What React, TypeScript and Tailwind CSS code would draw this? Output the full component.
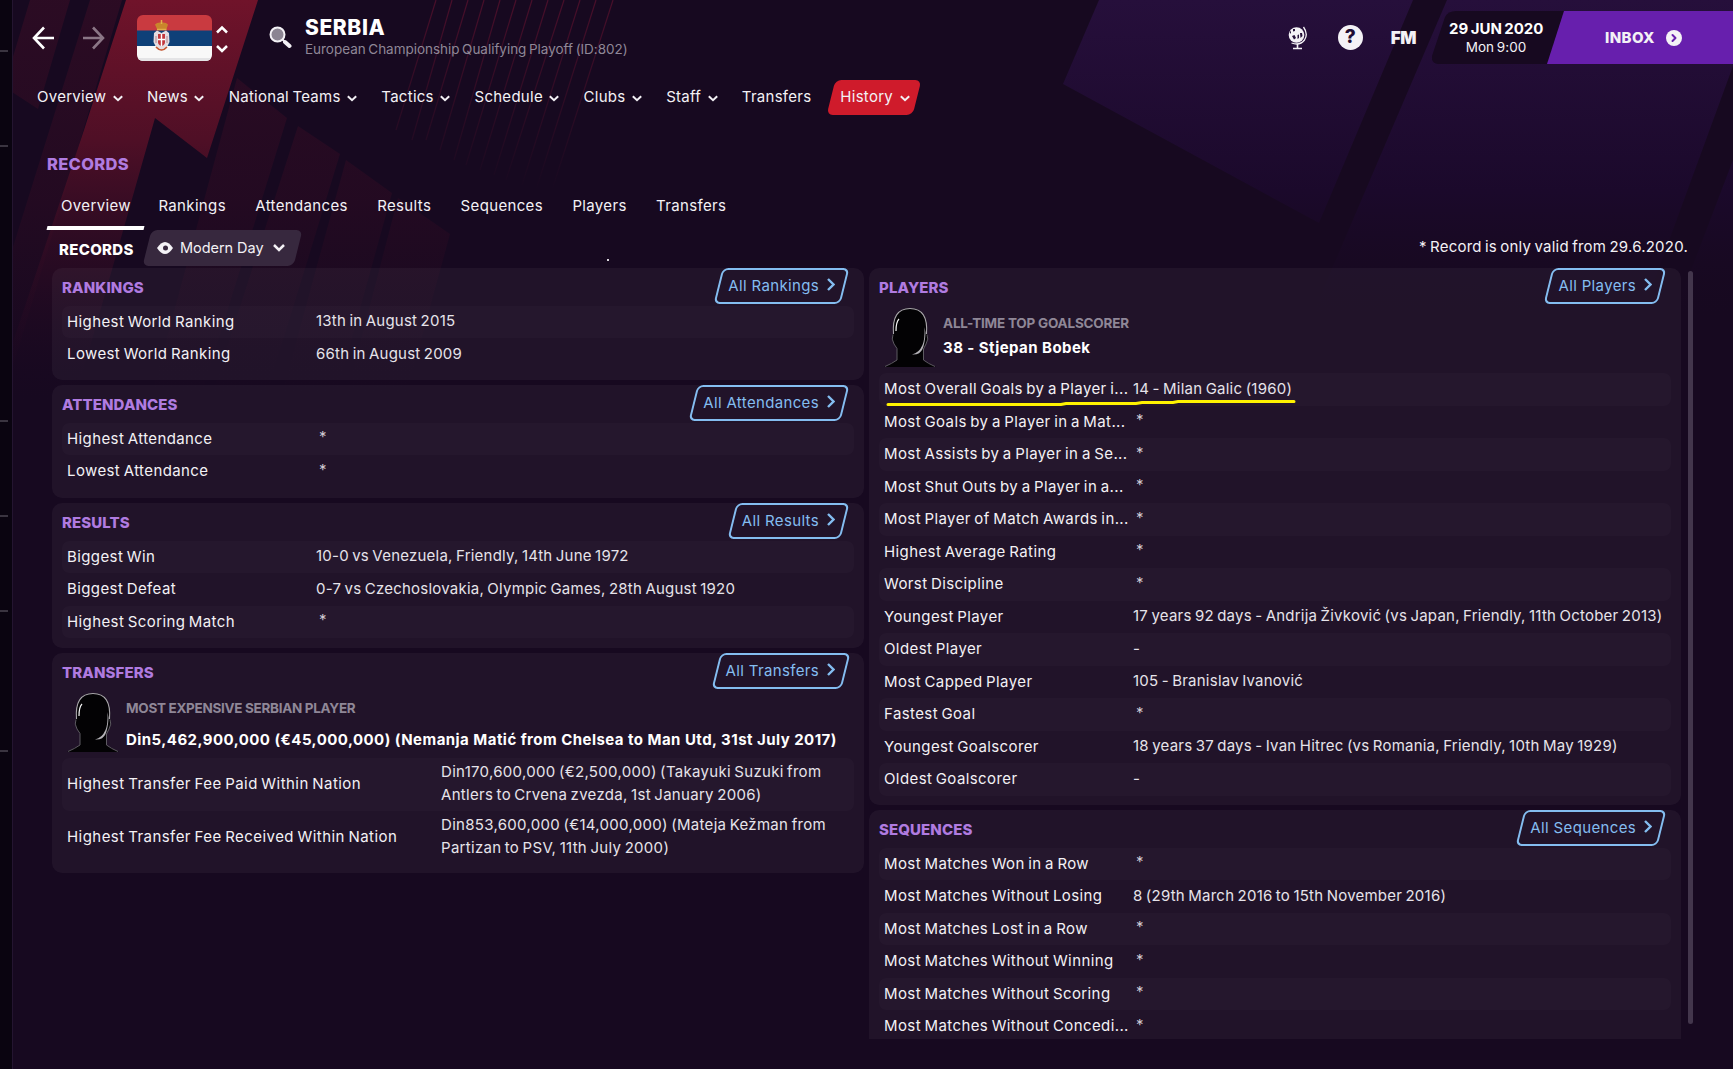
import { ChevronRight } from 'lucide-react';

type Row = { label: string; value: string };

const navItems = ['Overview', 'News', 'National Teams', 'Tactics', 'Schedule', 'Clubs', 'Staff'];

const tabs = ['Rankings', 'Attendances', 'Results', 'Sequences', 'Players', 'Transfers'];

const rankings: Row[] = [
  { label: 'Highest World Ranking', value: '13th in August 2015' },
  { label: 'Lowest World Ranking', value: '66th in August 2009' },
];

const attendances: Row[] = [
  { label: 'Highest Attendance', value: '*' },
  { label: 'Lowest Attendance', value: '*' },
];

const results: Row[] = [
  { label: 'Biggest Win', value: '10-0 vs Venezuela, Friendly, 14th June 1972' },
  { label: 'Biggest Defeat', value: '0-7 vs Czechoslovakia, Olympic Games, 28th August 1920' },
  { label: 'Highest Scoring Match', value: '*' },
];

const transfers = [
  {
    label: 'Highest Transfer Fee Paid Within Nation',
    lines: ['Din170,600,000 (€2,500,000) (Takayuki Suzuki from', 'Antlers to Crvena zvezda, 1st January 2006)'],
  },
  {
    label: 'Highest Transfer Fee Received Within Nation',
    lines: ['Din853,600,000 (€14,000,000) (Mateja Kežman from', 'Partizan to PSV, 11th July 2000)'],
  },
];

const players: Row[] = [
  { label: 'Most Overall Goals by a Player i...', value: '14 - Milan Galic (1960)' },
  { label: 'Most Goals by a Player in a Mat...', value: '*' },
  { label: 'Most Assists by a Player in a Se...', value: '*' },
  { label: 'Most Shut Outs by a Player in a...', value: '*' },
  { label: 'Most Player of Match Awards in...', value: '*' },
  { label: 'Highest Average Rating', value: '*' },
  { label: 'Worst Discipline', value: '*' },
  { label: 'Youngest Player', value: '17 years 92 days - Andrija Živković (vs Japan, Friendly, 11th October 2013)' },
  { label: 'Oldest Player', value: '-' },
  { label: 'Most Capped Player', value: '105 - Branislav Ivanović' },
  { label: 'Fastest Goal', value: '*' },
  { label: 'Youngest Goalscorer', value: '18 years 37 days - Ivan Hitrec (vs Romania, Friendly, 10th May 1929)' },
  { label: 'Oldest Goalscorer', value: '-' },
];

const sequences: Row[] = [
  { label: 'Most Matches Won in a Row', value: '*' },
  { label: 'Most Matches Without Losing', value: '8 (29th March 2016 to 15th November 2016)' },
  { label: 'Most Matches Lost in a Row', value: '*' },
  { label: 'Most Matches Without Winning', value: '*' },
  { label: 'Most Matches Without Scoring', value: '*' },
  { label: 'Most Matches Without Concedi...', value: '*' },
];

function Backdrop() {
  return (
    <svg className="absolute inset-0" width="1733" height="1069" viewBox="0 0 1733 1069">
      <defs>
        <linearGradient id="red" x1="0" y1="0" x2="0" y2="1">
          <stop offset="0" stopColor="#70132a" />
          <stop offset="0.35" stopColor="#4f0f26" />
          <stop offset="1" stopColor="#1c0822" stopOpacity="0" />
        </linearGradient>
        <linearGradient id="dim" gradientUnits="userSpaceOnUse" x1="0" y1="0" x2="0" y2="400">
          <stop offset="0" stopColor="#4a0f28" stopOpacity="0.4" />
          <stop offset="0.5" stopColor="#3a0c24" stopOpacity="0.35" />
          <stop offset="1" stopColor="#2a0a22" stopOpacity="0" />
        </linearGradient>
        <linearGradient id="purple" gradientUnits="userSpaceOnUse" x1="0" y1="0" x2="0" y2="320">
          <stop offset="0" stopColor="#260f3b" />
          <stop offset="0.6" stopColor="#1b092b" />
          <stop offset="1" stopColor="#180920" stopOpacity="0" />
        </linearGradient>
        <linearGradient id="lines" gradientUnits="userSpaceOnUse" x1="0" y1="0" x2="0" y2="190">
          <stop offset="0" stopColor="#6a1230" stopOpacity="0.6" />
          <stop offset="1" stopColor="#6a1230" stopOpacity="0" />
        </linearGradient>
      </defs>
      <path d="M1099 0H1413L1319 223L1063 84Z" fill="url(#purple)" />
      <path d="M1447 0H1733V66L1640 320H1310Z" fill="url(#purple)" />
      <path d="M1733 160V320H1672Z" fill="url(#purple)" />
      <path d="M30 0H70L38 109L12 92V60Z M90 0H122L12 370V250Z" fill="url(#dim)" />
      <path d="M126 0H258L207 158L155 118L75 400H12V345L84 130Z" fill="url(#red)" />
      <path d="M237 78L287 118L200 400H150Z" fill="url(#dim)" />
      <path d="M298 126L340 154L265 400H210Z" fill="url(#dim)" />
      <path d="M346 160L392 193L335 400H280Z" fill="url(#dim)" />
      <path d="M398 198L450 234L405 400H345Z" fill="url(#dim)" />
      <g stroke="url(#lines)" strokeWidth="1.2" fill="none">
        <path d="M436 0L396 130M452 0L412 140M468 0L426 140M484 0L440 150M500 0L454 160M516 0L466 165M532 0L480 170M548 0L494 175M564 0L506 180M580 0L522 185M596 0L536 190M613 0L552 190" />
      </g>
      <rect width="12" height="1069" fill="#0a0410" />
      <path d="M12.5 0V1069" stroke="#241530" />
      <path d="M0 51H8M0 146H8M0 421H8M0 516H8M0 611H8M0 751H8" stroke="#3a3440" strokeWidth="2" />
    </svg>
  );
}

function Flag() {
  return (
    <svg width="75" height="46" viewBox="0 0 75 46">
      <defs>
        <clipPath id="flag">
          <rect width="75" height="46" rx="6" />
        </clipPath>
      </defs>
      <g clipPath="url(#flag)">
        <rect width="75" height="16" fill="#c93a40" />
        <rect y="15.5" width="75" height="15.5" fill="#0e4078" />
        <rect y="31" width="75" height="15" fill="#f8f8f8" />
        <rect y="43" width="75" height="3" fill="#e4e4e6" />
      </g>
      <path d="M20 14L18 9.500Q20 7 24.500 7.500Q29 7 31 9.500L29.500 14Z" fill="#c9862c" />
      <path d="M20 14.500H29.500M24.500 5V9" stroke="#e2b04a" strokeWidth="1.500" />
      <path d="M17 18L20 15.500L24.500 18L29 15.500L32 18L32.500 27L29 34L24.500 36L20 34L16.500 27Z" fill="#e4dde1" />
      <path d="M21 19H28V27Q28 30 24.500 31Q21 30 21 27Z" fill="#c2373c" />
      <path d="M24.500 19V31M21 24.500H28" stroke="#fff" strokeWidth="1.400" />
      <path d="M19 21V28M30 21V28" stroke="#b8848c" strokeWidth="1" />
      <path d="M19 32Q24.500 38 30 32" stroke="#c9562c" strokeWidth="1.600" fill="none" />
    </svg>
  );
}

function GlobeIcon() {
  return (
    <svg width="20" height="24" viewBox="0 0 20 24">
      <circle cx="8.500" cy="9" r="7.800" fill="#f4f2f6" />
      <path d="M5 3L7 3L7 5L5 5.500ZM4 10L6.500 9L8 12L6 13.500ZM9.500 9L11 8.500L11 12L9.500 13ZM12 7L14 7L14.500 10L12.500 12ZM1.500 6L3 5L3 8Z" fill="#241138" />
      <path d="M15.500 1Q20.500 8 16.500 14Q12 20 3.500 17" stroke="#f4f2f6" strokeWidth="1.300" fill="none" />
      <path d="M9.500 18V22M5 22.500H14" stroke="#f4f2f6" strokeWidth="1.600" />
    </svg>
  );
}

function Silhouette() {
  return (
    <svg className="shrink-0" width="52" height="60" viewBox="0 0 52 60">
      <path d="M0 60Q8 56 13 53V41L10 37Q7 30 9 27Q7 1 26 1Q45 1 43 27Q45 30 42 37L39 42V53Q44 56 52 60Z" fill="#030204" />
      <path d="M9.500 27Q7.500 1.500 26 1.500Q44.500 1.500 42.500 27" stroke="#a9a6ab" strokeWidth="1.100" fill="none" />
      <path d="M12 24Q12 15 15 12" stroke="#f4f4f4" strokeWidth="1.200" fill="none" />
      <path d="M40.500 20Q41 32 38.500 38Q35 46 28 47.500Q36 48 38.500 42Q41 36 41.500 26Z" fill="#b4b2b7" />
      <path d="M9 27.500Q7 32 10 37L13 41.500V53Q8 56.500 1 59.500M43 27.500Q45 32 42 37L39.500 42V53Q44 56.500 51 59.500" stroke="#5d5a61" strokeWidth="1" fill="none" />
    </svg>
  );
}

function NavChevron() {
  return (
    <svg className="relative mt-[1px]" width="10" height="7" viewBox="0 0 10 7">
      <path d="M0.800 1.200L5 5.200L9.200 1.200" stroke="#f3f1f5" strokeWidth="2" fill="none" />
    </svg>
  );
}

function LinkButton({ label }: { label: string }) {
  return (
    <button className="relative mr-[15px] flex h-[36px] items-center gap-[8px] pr-[14px] pl-[14px] text-[15px] tracking-[0.35px] text-[#84bdf0]">
      <span className="absolute inset-x-[4px] inset-y-0 -skew-x-[14deg] rounded-[6px] border-2 border-[#84bdf0]" />
      <span>{label}</span>
      <svg className="-mt-[3px]" width="8" height="13" viewBox="0 0 8 13">
        <path d="M1 1L6.500 6.500L1 12" stroke="currentColor" strokeWidth="2.400" fill="none" />
      </svg>
    </button>
  );
}

function PanelHeader({ title, link }: { title: string; link: string }) {
  return (
    <div className="flex h-[37.5px] items-start justify-between pl-[10px]">
      <h2 className="mt-[9px] text-[15px] leading-[22px] font-extrabold tracking-[0.1px] text-[#b07be0]">{title}</h2>
      <LinkButton label={link} />
    </div>
  );
}

function Rows({ rows }: { rows: Row[] }) {
  return (
    <div className="px-[10px]">
      {rows.map((row) => (
        <div key={row.label} className="flex h-[32.5px] items-center rounded-[7px] pl-[5px] odd:bg-white/[0.02]">
          <span className="w-[249px] shrink-0 tracking-[0.4px] whitespace-nowrap">{row.label}</span>
          {row.value === '*' ? (
            <span className="-mt-[3px] pl-[3px] text-[#cfcad4]">*</span>
          ) : (
            <span className="-mt-[1px] tracking-[0.23px] whitespace-nowrap text-[#e6e3ea]">{row.value}</span>
          )}
        </div>
      ))}
    </div>
  );
}

export default function App() {
  return (
    <div className="relative h-[1069px] w-[1733px] overflow-hidden bg-[#170920] font-['Inter','Liberation_Sans',sans-serif] text-[15px] tracking-[0.35px] text-[#f3f1f5] [word-spacing:-1.1px]">
      <Backdrop />
      <div className="relative flex h-full flex-col pl-[12px]">
        <header className="flex h-[76px] items-start">
          <svg className="mt-[26px] ml-[20px]" width="23" height="24" viewBox="0 0 23 24">
            <path d="M12 1.500L2 12L12 22.500M2 12H22" stroke="#fff" strokeWidth="2.600" fill="none" />
          </svg>
          <svg className="mt-[26px] ml-[27px]" width="23" height="24" viewBox="0 0 23 24">
            <path d="M11 1.500L21 12L11 22.500M21 12H1" stroke="#8b7686" strokeWidth="2.600" fill="none" />
          </svg>
          <div className="mt-[15px] ml-[32px]">
            <Flag />
          </div>
          <svg className="mt-[25px] ml-[4px]" width="12" height="28" viewBox="0 0 12 28">
            <path d="M1 7.500L6 2.500L11 7.500M1 21L6 26L11 21" stroke="#fff" strokeWidth="2.500" fill="none" />
          </svg>
          <svg className="mt-[26px] ml-[41px]" width="23" height="23" viewBox="0 0 23 23">
            <circle cx="8.500" cy="8.500" r="7" fill="#8b8492" stroke="#f3f1f5" strokeWidth="2" />
            <path d="M13.500 13.500L16 16" stroke="#f3f1f5" strokeWidth="2" />
            <path d="M16 16L20.500 20" stroke="#f3f1f5" strokeWidth="4" strokeLinecap="round" />
          </svg>
          <div className="mt-[14px] ml-[13px]">
            <h1 className="text-[21px] leading-[27px] font-extrabold tracking-[0.6px] text-white">SERBIA</h1>
            <p className="text-[13.5px] leading-[17px] tracking-[-0.03px] text-[#8f8797]">
              European Championship Qualifying Playoff (ID:802)
            </p>
          </div>
          <div className="ml-auto flex">
            <div className="mt-[26px] mr-[30px]">
              <GlobeIcon />
            </div>
            <div className="mt-[25px] flex size-[25px] items-center justify-center rounded-full bg-[#f4f2f6] text-[19px] font-extrabold tracking-normal text-[#1f0c33]">
              ?
            </div>
            <div className="mt-[26px] ml-[28px] text-[17px] leading-[24px] font-black tracking-[-0.5px]">FM</div>
            <div className="relative mt-[11px] ml-[16px] flex h-[53px] w-[301px]">
              <svg className="absolute inset-0" width="301" height="53" viewBox="0 0 301 53">
                <path d="M24 0H132L116 53H6Q-1 52 0 45L13 6Q16 0 24 0Z" fill="#170920" />
                <path d="M132 0H301V53H115Z" fill="#671fad" />
              </svg>
              <div className="relative ml-[17px] w-[94px] text-center">
                <div className="mt-[7.5px] text-[15px] leading-[20px] font-bold tracking-[0px] whitespace-nowrap text-white">29 JUN 2020</div>
                <div className="text-[13.5px] leading-[16px] tracking-[0.05px]">Mon 9:00</div>
              </div>
              <div className="relative ml-[62px] flex items-center gap-[11px] text-[15px] font-extrabold tracking-[0.4px]">
                <span className="mt-[1px]">INBOX</span>
                <span className="flex size-4 items-center justify-center rounded-full bg-[#f4f2f6] text-[#671fad]">
                  <ChevronRight size={12} strokeWidth={4} />
                </span>
              </div>
            </div>
          </div>
        </header>

        <nav className="flex h-[43px] items-center pl-[25px] tracking-[0.27px]">
          {navItems.map((item) => (
            <a key={item} className="mr-[24.2px] flex items-center gap-[6.5px] whitespace-nowrap">
              {item}
              <NavChevron />
            </a>
          ))}
          <a>Transfers</a>
          <a className="relative ml-[16px] flex h-[35px] w-[94px] items-center gap-[6.5px] pl-[13px]">
            <span className="absolute inset-x-[4px] inset-y-0 -skew-x-[14deg] rounded-[6px] bg-[#cf1b2b]" />
            <span className="relative">History</span>
            <NavChevron />
          </a>
        </nav>

        <h2 className="mt-[33px] ml-[35px] text-[16.5px] leading-[24px] font-extrabold tracking-[0.3px] text-[#b07be0]">RECORDS</h2>

        <div className="mt-[8px] ml-[35px] flex h-[46px] gap-[29.4px] leading-[43px]">
          <a className="relative -mr-[16px] w-[98px] pl-[14px]">
            Overview
            <span className="absolute bottom-0 left-0 h-[4px] w-[97px] -skew-x-[14deg] bg-white" />
          </a>
          {tabs.map((tab) => (
            <a key={tab}>{tab}</a>
          ))}
        </div>

        <div className="flex h-[38px] items-start pr-[45px] pl-[47px]">
          <h3 className="mt-[8.5px] w-[84px] text-[15px] leading-[22px] font-extrabold tracking-[0.3px] text-white">RECORDS</h3>
          <button className="relative flex h-[36px] w-[159px] items-center pl-[14px] text-[14.5px] tracking-[-0.05px]">
            <span className="absolute inset-x-[4px] inset-y-0 -skew-x-[14deg] rounded-[6px] bg-[#37283e]" />
            <svg className="relative mr-[7px]" width="16" height="12" viewBox="0 0 16 12">
              <path d="M0 6Q8 -6 16 6Q8 18 0 6Z" fill="#f4f2f6" />
              <circle cx="8.500" cy="6" r="2.500" fill="#37283e" />
            </svg>
            <span className="relative">Modern Day</span>
            <svg className="relative ml-auto mr-[17px]" width="12" height="8" viewBox="0 0 12 8">
              <path d="M1 1L6 6L11 1" stroke="#f4f2f6" strokeWidth="2.500" fill="none" />
            </svg>
          </button>
          <span className="mt-[29px] ml-[305px] size-[2px] bg-[#d9d6dc]" />
          <p className="mt-[6px] ml-auto tracking-[0.22px]">* Record is only valid from 29.6.2020.</p>
        </div>

        <main className="flex h-[771px] items-start gap-[5px] overflow-hidden pl-[40px]">
          <div className="flex w-[812px] flex-col">
            <section className="mb-[5px] h-[112px] rounded-[10px] bg-white/[0.045]">
              <PanelHeader title="RANKINGS" link="All Rankings" />
              <Rows rows={rankings} />
            </section>
            <section className="mb-[5.5px] h-[112.5px] rounded-[10px] bg-white/[0.045]">
              <PanelHeader title="ATTENDANCES" link="All Attendances" />
              <Rows rows={attendances} />
            </section>
            <section className="mb-[5.5px] h-[144.5px] rounded-[10px] bg-white/[0.045]">
              <PanelHeader title="RESULTS" link="All Results" />
              <Rows rows={results} />
            </section>
            <section className="h-[220px] rounded-[10px] bg-white/[0.045]">
              <PanelHeader title="TRANSFERS" link="All Transfers" />
              <div className="mt-[1px] flex h-[66px] pl-[15px]">
                <Silhouette />
                <div className="ml-[7px] font-bold whitespace-nowrap">
                  <div className="mt-[6.5px] text-[13.5px] leading-[20px] tracking-[-0.3px] text-[#8f8797] [word-spacing:0px]">
                    MOST EXPENSIVE SERBIAN PLAYER
                  </div>
                  <div className="mt-[11px] leading-[22px] tracking-[0.46px] text-white [word-spacing:0px]">
                    Din5,462,900,000 (€45,000,000) (Nemanja Matić from Chelsea to Man Utd, 31st July 2017)
                  </div>
                </div>
              </div>
              <div className="px-[10px]">
                {transfers.map((row) => (
                  <div key={row.label} className="flex h-[53px] items-center rounded-[7px] pl-[5px] odd:bg-white/[0.02]">
                    <span className="w-[374px] shrink-0 tracking-[0.45px]">{row.label}</span>
                    <span className="-mt-[2px] leading-[23px] tracking-[0.3px] whitespace-nowrap text-[#e6e3ea]">
                      {row.lines[0]}
                      <br />
                      {row.lines[1]}
                    </span>
                  </div>
                ))}
              </div>
            </section>
          </div>

          <div className="flex w-[812px] flex-col gap-[5.5px]">
            <section className="relative h-[536.5px] rounded-[10px] bg-white/[0.045]">
              <PanelHeader title="PLAYERS" link="All Players" />
              <div className="mt-[1.5px] flex h-[66px] pl-[15px]">
                <Silhouette />
                <div className="ml-[7px] font-bold whitespace-nowrap">
                  <div className="mt-[6px] text-[13.5px] leading-[20px] tracking-[-0.2px] text-[#8f8797] [word-spacing:0px]">
                    ALL-TIME TOP GOALSCORER
                  </div>
                  <div className="mt-[4px] leading-[22px] tracking-[0.45px] text-white [word-spacing:0px]">38 - Stjepan Bobek</div>
                </div>
              </div>
              <Rows rows={players} />
              <svg className="absolute top-[130px] left-[17px]" width="412" height="8" viewBox="0 0 412 8">
                <path d="M2 6.500H175L180 5.500H250L256 4.500H287L292 3.500H408" stroke="#fff200" strokeWidth="3" strokeLinecap="round" fill="none" />
              </svg>
            </section>
            <section className="h-[242px] rounded-t-[10px] bg-white/[0.045]">
              <PanelHeader title="SEQUENCES" link="All Sequences" />
              <Rows rows={sequences} />
            </section>
          </div>

          <div className="mt-[3px] ml-[2px] h-[753px] w-[5px] rounded-full bg-[#43364c]" />
        </main>
      </div>
    </div>
  );
}
